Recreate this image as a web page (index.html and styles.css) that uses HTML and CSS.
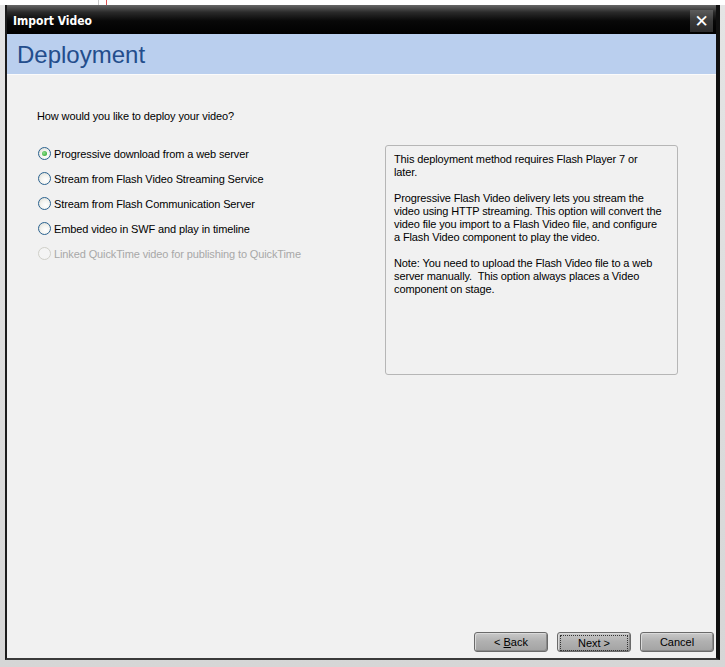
FILE: index.html
```html
<!DOCTYPE html>
<html lang="en">
<head>
    <meta charset="UTF-8">
    <meta name="viewport" content="width=device-width, initial-scale=1.0">
    <title>Import Video</title>
    <link rel="stylesheet" href="styles.css">
</head>
<body>
    <div class="window">
        <div class="titlebar">
            <span class="title">Import Video</span>
            <span class="close">&#x2715;</span>
        </div>

        <header class="header">
            <h1>Deployment</h1>
        </header>

        <div class="body">
            <p class="question">How would you like to deploy your video?</p>

            <div class="main">
                <ul class="options">
                    <li><span class="radio checked"></span>Progressive download from a web server</li>
                    <li><span class="radio"></span>Stream from Flash Video Streaming Service</li>
                    <li><span class="radio"></span>Stream from Flash Communication Server</li>
                    <li><span class="radio"></span>Embed video in SWF and play in timeline</li>
                    <li class="disabled"><span class="radio"></span>Linked QuickTime video for publishing to QuickTime</li>
                </ul>

                <div class="info">
                    <p>This deployment method requires Flash Player 7 or<br>later.</p>
                    <p>Progressive Flash Video delivery lets you stream the<br>video using HTTP streaming. This option will convert the<br>video file you import to a Flash Video file, and configure<br>a Flash Video component to play the video.</p>
                    <p>Note: You need to upload the Flash Video file to a web<br>server manually.&nbsp; This option always places a Video<br>component on stage.</p>
                </div>
            </div>

            <div class="buttons">
                <button type="button">&lt; <u>B</u>ack</button>
                <button type="button" class="focus"><span>Next &gt;</span></button>
                <button type="button">Cancel</button>
            </div>
        </div>
    </div>
</body>
</html>
```

FILE: styles.css
```css
body {
    margin: 0;
    padding: 0;
    height: 667px;
    overflow: hidden;
    font-family: "Liberation Sans", Arial, sans-serif;
    font-size: 11px;
    letter-spacing: -0.12px;
    color: #000;
    background:
        linear-gradient(90deg, transparent 98px, #c9c9c9 98px, #c9c9c9 99px, transparent 99px, transparent 106px, #d55 106px, #d55 107px, transparent 107px) top / 100% 5px no-repeat,
        linear-gradient(#fff 0, #fff 5px, #e4e4e4 5px, #d6d6d6 100%);
}

.window {
    margin: 5px 0 0 5px;
    width: 709px;
    height: 653px;
    border-left: 2px solid #1c1c1c;
    border-right: 4px solid #101010;
    border-bottom: 2px solid #3a3a3a;
    background: #f1f1f1;
    display: flex;
    flex-direction: column;
}

.titlebar {
    height: 29px;
    background: linear-gradient(#666 0, #2a2a2a 25%, #080808 55%, #000 100%);
    display: flex;
    align-items: center;
    justify-content: space-between;
    padding: 0 3px 0 6px;
}

.title {
    color: #fff;
    font-family: "DejaVu Sans Condensed", "DejaVu Sans", sans-serif;
    font-weight: bold;
    font-size: 12px;
    letter-spacing: 0;
    margin-top: 2px;
}

.close {
    width: 23px;
    height: 22px;
    margin-top: 2px;
    background: linear-gradient(#5c5c5c, #3a3a3a 50%, #2c2c2c);
    color: #fff;
    font-family: "DejaVu Sans", sans-serif;
    font-weight: bold;
    font-size: 17px;
    letter-spacing: 0;
    display: flex;
    align-items: center;
    justify-content: center;
}

.header {
    height: 40px;
    background: #bacfee;
    border-bottom: 1px solid #fbfbfb;
    display: flex;
    align-items: center;
    padding-left: 10px;
}

.header h1 {
    margin: 0;
    font-family: "Liberation Sans", Arial, sans-serif;
    font-weight: normal;
    font-size: 24px;
    letter-spacing: 0;
    color: #234d8c;
    margin-top: 2px;
}

.body {
    flex: 1;
    padding: 35px 2px 6px 30px;
    display: flex;
    flex-direction: column;
}

.question {
    margin: 0;
    line-height: 13px;
}

.main {
    margin-top: 18px;
    display: flex;
    align-items: flex-start;
}

.options {
    list-style: none;
    margin: 0;
    padding: 0;
    width: 348px;
}

.options li {
    height: 25px;
    display: flex;
    align-items: center;
}

.options li.disabled {
    color: #a8a8a8;
}

.radio {
    width: 11px;
    height: 11px;
    border: 1px solid #2a628f;
    border-radius: 50%;
    background: radial-gradient(circle at 60% 65%, #fff 0, #f4f4f0 45%, #d8d8d0 100%);
    margin: 0 3px 0 1px;
    display: flex;
    align-items: center;
    justify-content: center;
}

.radio.checked::after {
    content: "";
    width: 5px;
    height: 5px;
    border-radius: 50%;
    background: radial-gradient(circle at 40% 40%, #8fe08f, #21a121);
}

.disabled .radio {
    border-color: #cfcfc8;
    background: #f4f4f4;
}

.info {
    margin-top: 4px;
    width: 275px;
    height: 214px;
    border: 1px solid #b6b6b6;
    border-radius: 3px;
    padding: 7px 8px;
    white-space: nowrap;
}

.info p {
    margin: 0 0 13px 0;
    line-height: 13px;
}

.buttons {
    margin-top: auto;
    display: flex;
    justify-content: flex-end;
    gap: 9px;
}

.buttons button {
    width: 74px;
    height: 20px;
    padding: 0;
    border: 1px solid #6a6a6a;
    border-radius: 3px;
    background: linear-gradient(#c9c9c9, #b1b1b1 45%, #a3a3a3 100%);
    box-shadow: inset 1px 1px 0 #dadada, inset -1px -1px 0 #8a8a8a;
    font-family: "Liberation Sans", Arial, sans-serif;
    font-size: 11px;
    color: #000;
}

.buttons button.focus span {
    display: block;
    margin: 2px;
    height: 14px;
    line-height: 14px;
    border: 1px dotted #333;
}
```
